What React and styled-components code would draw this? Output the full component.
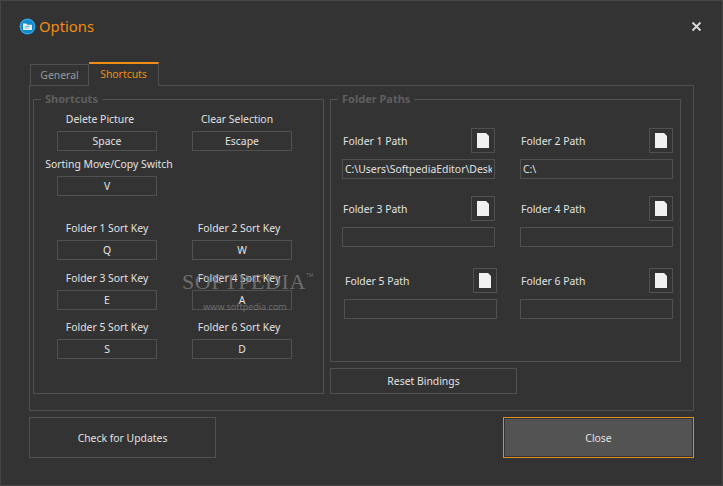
import React, { useState } from "react";
import styled, { createGlobalStyle } from "styled-components";

const GlobalStyle = createGlobalStyle`
  html, body {
    margin: 0;
    padding: 0;
    background: #333333;
  }
`;

const Window = styled.div`
  position: relative;
  width: 723px;
  height: 486px;
  box-sizing: border-box;
  border: 1px solid #454545;
  background: #333333;
  padding: 0 28px 0 28px;
  font-family: "Noto Sans", sans-serif;
  font-size: 10.4px;
  color: #e2e2e2;
  overflow: hidden;
`;

const TitleBar = styled.div`
  display: flex;
  align-items: center;
  justify-content: space-between;
  height: 60px;
  padding: 0 0 10px 0;
  box-sizing: border-box;
  margin-left: -10px;
`;

const TitleGroup = styled.div`
  display: flex;
  align-items: center;
  gap: 3px;
`;

const Title = styled.span`
  font-size: 14.8px;
  color: #f08c14;
`;

const CloseIcon = styled.button`
  background: none;
  border: none;
  padding: 0;
  display: flex;
  margin-right: -8px;
  margin-top: 1px;
`;

const TabBar = styled.div`
  display: flex;
  align-items: flex-end;
  height: 24px;
  padding-left: 1px;
`;

const Tab = styled.div`
  box-sizing: border-box;
  text-align: center;
  background: #333333;
  margin-bottom: -1px;
  position: relative;
  border: 1px solid #505050;
  border-left: ${(props) => (props.$active ? "none" : "1px solid #505050")};
  border-bottom: ${(props) => (props.$active ? "none" : "1px solid #505050")};
  border-top: ${(props) => (props.$active ? "2px solid #f08c14" : "1px solid #505050")};
  width: ${(props) => props.$width}px;
  height: ${(props) => (props.$active ? 24 : 22)}px;
  line-height: ${(props) => (props.$active ? 21 : 20)}px;
  color: ${(props) => (props.$active ? "#f08c14" : "#9a9a9a")};
`;

const TabPanel = styled.div`
  box-sizing: border-box;
  height: 326px;
  border: 1px solid #505050;
  padding: 6px 12px 0 3px;
  display: flex;
  gap: 6px;
`;

const Group = styled.fieldset`
  box-sizing: border-box;
  margin: 0;
  border: 1px solid #505050;
  padding: 0;
  min-width: 0;
  width: ${(props) => props.$width}px;
  height: ${(props) => props.$height}px;
`;

const Legend = styled.legend`
  margin-left: ${(props) => props.$indent}px;
  padding: 0 4px;
  font-size: 11px;
  font-weight: 700;
  line-height: 14px;
  color: #5f5f5f;
`;

const KeyGrid = styled.div`
  display: grid;
  grid-template-columns: 100px 100px;
  column-gap: 35px;
  padding: 1px 0 0 23px;
`;

const KeyField = styled.div`
  display: flex;
  flex-direction: column;
  align-items: center;
  grid-column: ${(props) => props.$col};
  margin-top: ${(props) => props.$top}px;
`;

// labels are not quite centred over their boxes, $nudge is how far off centre
const KeyLabel = styled.label`
  height: 24px;
  line-height: 25px;
  white-space: nowrap;
  margin-left: ${(props) => (props.$nudge || 0) * 2}px;
`;

const KeyBox = styled.div`
  box-sizing: border-box;
  width: 100px;
  height: 20px;
  border: 1px solid #505050;
  line-height: 18px;
  text-align: center;
`;

const PathColumn = styled.div`
  display: flex;
  flex-direction: column;
`;

const PathGrid = styled.div`
  display: grid;
  grid-template-columns: 153px 153px;
  column-gap: 25px;
  padding: 22px 0 0 11px;
`;

const PathField = styled.div`
  width: 153px;
  margin-left: ${(props) => props.$shift || 0}px;
  margin-top: ${(props) => props.$top || 0}px;
`;

const PathHead = styled.div`
  display: flex;
  align-items: center;
  justify-content: space-between;
  height: 25px;
  margin-bottom: 6px;
  padding-left: 1px;
`;

const BrowseButton = styled.button`
  box-sizing: border-box;
  width: 24px;
  height: 25px;
  padding: 0;
  background: #333333;
  border: 1px solid #505050;
  display: flex;
  align-items: center;
  justify-content: center;
`;

const PathInput = styled.input`
  box-sizing: border-box;
  display: block;
  width: 153px;
  height: 20px;
  padding: 0 2px;
  background: #333333;
  border: 1px solid #505050;
  outline: none;
  font-family: "Noto Sans", sans-serif;
  font-size: 10.4px;
  color: #e2e2e2;
`;

const FlatButton = styled.button`
  box-sizing: border-box;
  display: block;
  width: ${(props) => props.$width}px;
  height: ${(props) => props.$height}px;
  background: #333333;
  border: 1px solid #505050;
  color: #e2e2e2;
  font-family: "Noto Sans", sans-serif;
  font-size: 10.4px;
  padding: 0;
`;

const ResetButton = styled(FlatButton)`
  margin-top: 6px;
`;

const Footer = styled.div`
  display: flex;
  justify-content: space-between;
  margin-top: 6px;
`;

const PrimaryButton = styled(FlatButton)`
  background: #535353;
  border: 1px solid #e08c24;
  box-shadow: inset 0 0 0 1px #333333;
`;

const Watermark = styled.div`
  position: absolute;
  left: 181px;
  top: 268px;
  width: 130px;
  pointer-events: none;
  color: rgba(125, 125, 125, 0.8);
  text-align: center;
`;

const WatermarkName = styled.div`
  font-family: "Liberation Serif", serif;
  font-size: 22px;
  line-height: 25px;
  letter-spacing: 0.6px;
  white-space: nowrap;
  sup {
    font-family: "Liberation Sans", sans-serif;
    font-size: 5px;
    letter-spacing: 0;
    vertical-align: 12px;
    line-height: 0;
  }
`;

const WatermarkUrl = styled.div`
  font-size: 9px;
  line-height: 13px;
  margin-top: 6px;
  margin-right: 4px;
`;

const AppIcon = () => (
  <svg width="17" height="17" viewBox="0 0 17 17">
    <circle cx="8.5" cy="8.5" r="8" fill="#1488cc" />
    <circle cx="8.5" cy="8.5" r="7.2" fill="none" stroke="#4fb4e6" strokeWidth="0.8" />
    <path d="M4 5.5h3.2l1 1.2H13v5.3H4z" fill="#e8f3fa" />
    <path d="M6 8.4h5M6 10h3.5" stroke="#5aa6d6" strokeWidth="0.8" />
  </svg>
);

const FileIcon = () => (
  <svg width="12" height="15" viewBox="0 0 12 15">
    <path d="M0 0H9L12 3V15H0z" fill="#f1f1f1" />
  </svg>
);

const CrossIcon = () => (
  <svg width="11" height="11" viewBox="0 0 11 11">
    <path d="M1.5 1.5L9.5 9.5M9.5 1.5L1.5 9.5" stroke="#d8d8d8" strokeWidth="1.8" fill="none" />
  </svg>
);

const KEY_FIELDS = [
  { label: "Delete Picture", value: "Space", col: 1, top: 0, nudge: -7 },
  { label: "Clear Selection", value: "Escape", col: 2, top: 0, nudge: -5 },
  { label: "Sorting Move/Copy Switch", value: "V", col: 1, top: 1, nudge: 2 },
  { label: "Folder 1 Sort Key", value: "Q", col: 1, top: 20 },
  { label: "Folder 2 Sort Key", value: "W", col: 2, top: 20, nudge: -3 },
  { label: "Folder 3 Sort Key", value: "E", col: 1, top: 6 },
  { label: "Folder 4 Sort Key", value: "A", col: 2, top: 6, nudge: -3 },
  { label: "Folder 5 Sort Key", value: "S", col: 1, top: 5 },
  { label: "Folder 6 Sort Key", value: "D", col: 2, top: 5, nudge: -3 },
];

const PATH_FIELDS = [
  { label: "Folder 1 Path", value: "C:\\Users\\SoftpediaEditor\\Desktop" },
  { label: "Folder 2 Path", value: "C:\\" },
  { label: "Folder 3 Path", value: "", top: 17 },
  { label: "Folder 4 Path", value: "", top: 17 },
  { label: "Folder 5 Path", value: "", top: 21, shift: 2 },
  { label: "Folder 6 Path", value: "", top: 21 },
];

const App = () => {
  const [activeTab] = useState("Shortcuts");

  return (
    <Window>
      <GlobalStyle />
      <TitleBar>
        <TitleGroup>
          <AppIcon />
          <Title>Options</Title>
        </TitleGroup>
        <CloseIcon>
          <CrossIcon />
        </CloseIcon>
      </TitleBar>
      <TabBar>
        <Tab $width={59} $active={activeTab === "General"}>General</Tab>
        <Tab $width={70} $active={activeTab === "Shortcuts"}>Shortcuts</Tab>
      </TabBar>
      <TabPanel>
        <Group $width={291} $height={302}>
          <Legend $indent={7}>Shortcuts</Legend>
          <KeyGrid>
            {KEY_FIELDS.map((field) => (
              <KeyField key={field.label} $col={field.col} $top={field.top}>
                <KeyLabel $nudge={field.nudge}>{field.label}</KeyLabel>
                <KeyBox>{field.value}</KeyBox>
              </KeyField>
            ))}
          </KeyGrid>
        </Group>
        <PathColumn>
          <Group $width={351} $height={270}>
            <Legend $indent={7}>Folder Paths</Legend>
            <PathGrid>
              {PATH_FIELDS.map((field) => (
                <PathField key={field.label} $top={field.top} $shift={field.shift}>
                  <PathHead>
                    <label>{field.label}</label>
                    <BrowseButton>
                      <FileIcon />
                    </BrowseButton>
                  </PathHead>
                  <PathInput readOnly value={field.value} />
                </PathField>
              ))}
            </PathGrid>
          </Group>
          <ResetButton $width={187} $height={26}>Reset Bindings</ResetButton>
        </PathColumn>
      </TabPanel>
      <Footer>
        <FlatButton $width={187} $height={41}>Check for Updates</FlatButton>
        <PrimaryButton $width={191} $height={41}>Close</PrimaryButton>
      </Footer>
      <Watermark>
        <WatermarkName>SOFTPEDIA<sup>TM</sup></WatermarkName>
        <WatermarkUrl>www.softpedia.com</WatermarkUrl>
      </Watermark>
    </Window>
  );
};

export default App;
